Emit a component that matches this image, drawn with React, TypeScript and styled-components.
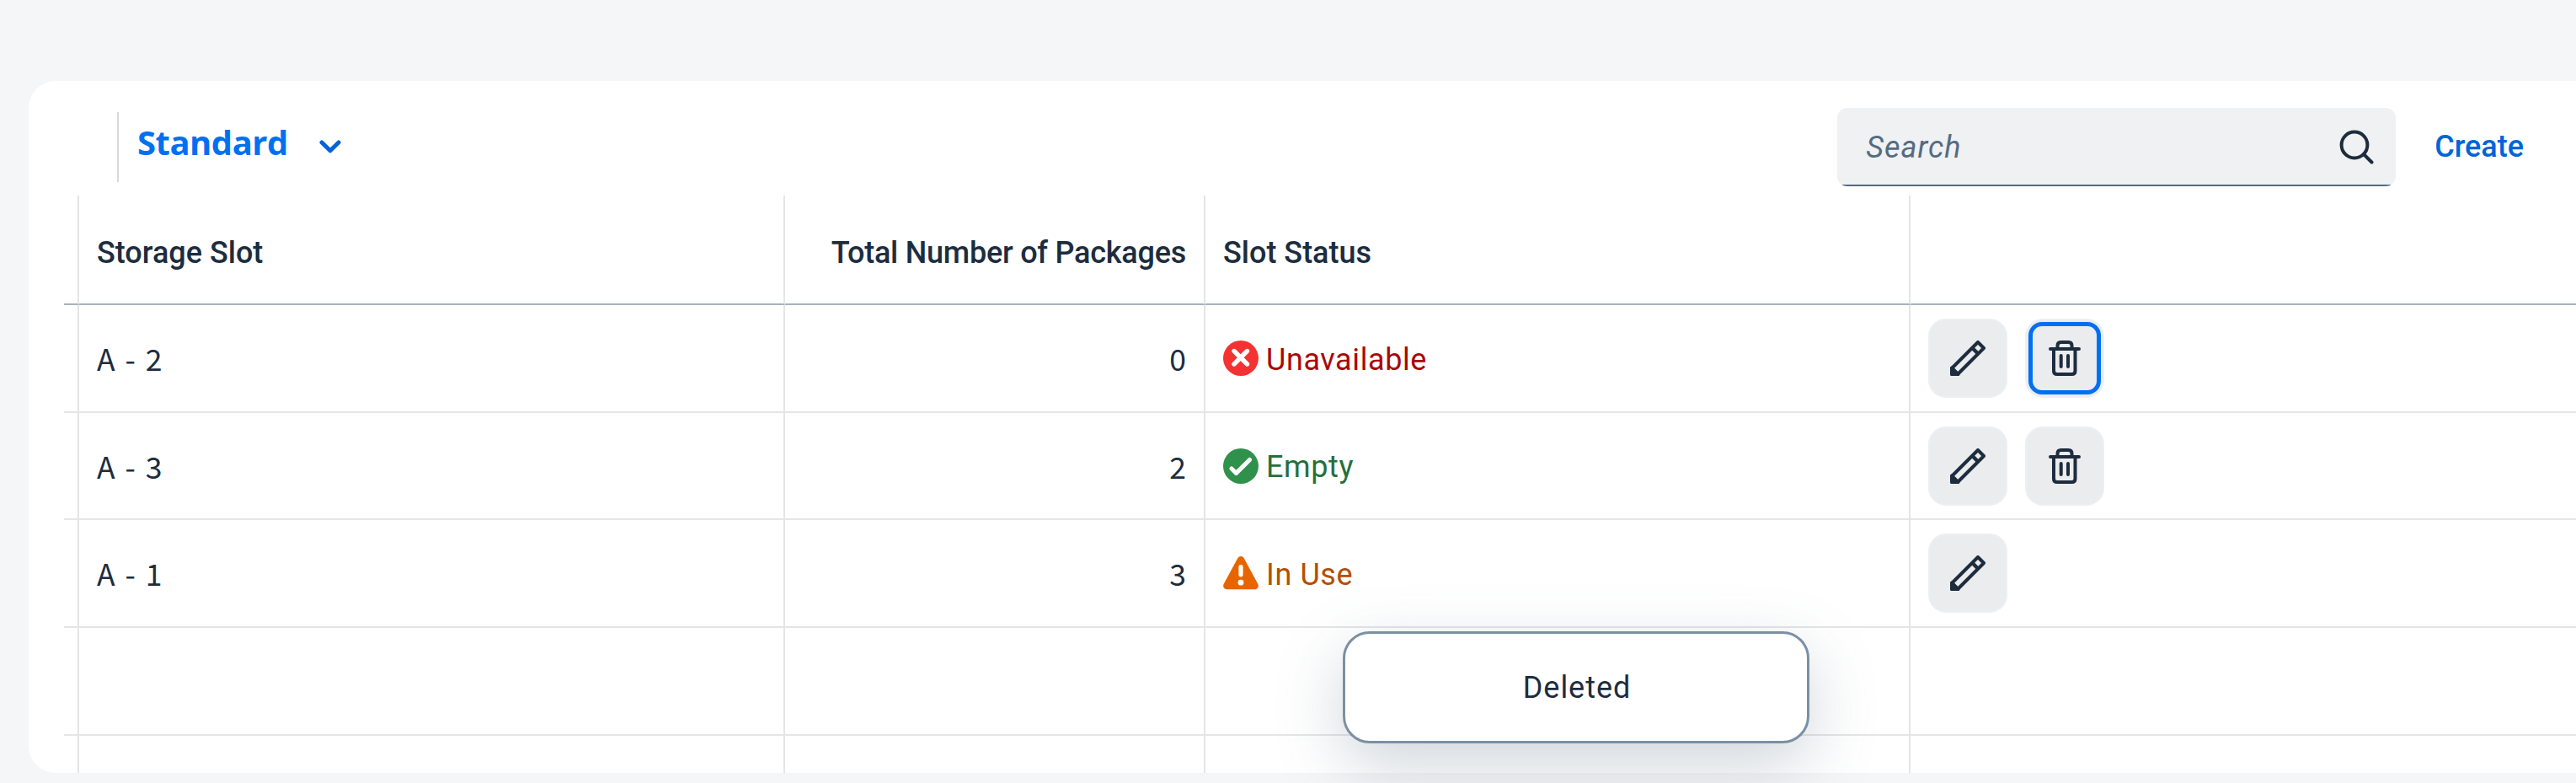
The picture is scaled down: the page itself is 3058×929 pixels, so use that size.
import React from 'react';
import styled, { createGlobalStyle } from 'styled-components';

const ink = '#1d2d3e';
const rule = '#e5e5e5';

const GlobalStyle = createGlobalStyle`
  * { box-sizing: border-box; }
  body { margin: 0; background: #f5f6f7; overflow: hidden; }
`;

const Page = styled.div`
  position: relative;
  height: 929px;
  padding: 96px 0 12px 34px;
  overflow: hidden;
  background: #f5f6f7;
  color: ${ink};
  font-family: Roboto, sans-serif;
  font-size: 36px;
`;

const Card = styled.section`
  display: flex;
  flex-direction: column;
  height: 821px;
  padding-left: 42px;
  overflow: hidden;
  background: #fff;
  border-radius: 32px 0 0 32px;
`;

const Toolbar = styled.header`
  display: flex;
  align-items: flex-start;
  flex: 0 0 136px;
  padding: 32px 62px 0 63px;
`;

const Separator = styled.span`
  width: 2px;
  height: 83px;
  margin-top: 5px;
  background: #d9d9d9;
`;

const VariantButton = styled.button`
  display: flex;
  align-items: flex-start;
  gap: 37px;
  height: 83px;
  padding: 0;
  margin: 5px 0 0 22px;
  border: 0;
  background: none;
  color: #0070f2;
  font: 700 40px/72px 'Open Sans', sans-serif;
  letter-spacing: -0.5px;
`;

const Chevron = styled.svg`
  display: block;
  width: 26px;
  height: 16px;
  margin-top: 33px;
`;

const SearchField = styled.label`
  display: flex;
  align-items: center;
  justify-content: space-between;
  width: 663px;
  height: 93px;
  margin-left: auto;
  padding: 0 26px 0 34px;
  background: linear-gradient(#556b82, #556b82) bottom / 100% 2px no-repeat #eff1f2;
  border-radius: 12px;
`;

const Placeholder = styled.span`
  color: #556b82;
  font-style: italic;
  line-height: 42px;
  letter-spacing: 1px;
`;

const SearchSvg = styled.svg`
  display: block;
  width: 41px;
  height: 41px;
`;

const CreateButton = styled.button`
  padding: 0;
  margin: 25px 0 0 46px;
  border: 0;
  background: none;
  color: #0064d9;
  font: 500 36px/42px Roboto, sans-serif;
`;

const Table = styled.div`
  display: grid;
  grid-template-columns: 18px 838px 499px 837px 1fr;
  grid-template-rows: 130px 128px 127px 128px 128px 46px;
  flex: 1;
`;

const Cell = styled.div<{ $head?: boolean; $end?: boolean; $edge?: boolean; $last?: boolean }>`
  display: flex;
  align-items: center;
  justify-content: ${(p) => (p.$end ? 'flex-end' : 'flex-start')};
  min-width: 0;
  padding: ${(p) => (p.$edge ? '0' : p.$head ? '7px 21px 0' : '0 21px')};
  border-right: ${(p) => (p.$last ? '0' : `2px solid ${rule}`)};
  border-bottom: 2px solid ${(p) => (p.$head ? '#a8b2bd' : rule)};
  white-space: nowrap;
  font-weight: ${(p) => (p.$head ? 500 : 400)};
  letter-spacing: ${(p) => (p.$head && p.$end ? '-0.24px' : 'normal')};
`;

const Value = styled.span`
  font-family: 'Noto Sans CJK JP', sans-serif;
  font-size: 35.5px;
  line-height: 42px;
  word-spacing: 4px;
`;

const Status = styled.span<{ $color: string }>`
  display: flex;
  align-items: center;
  gap: 9px;
  color: ${(p) => p.$color};
  letter-spacing: 0.6px;
  line-height: 42px;
`;

const StatusText = styled.span`
  padding-top: 3px;
`;

const StatusSvg = styled.svg`
  display: block;
  width: 42px;
  height: 42px;
`;

const Actions = styled.div`
  display: flex;
  gap: 21px;
`;

const IconButton = styled.button<{ $focused?: boolean }>`
  position: relative;
  display: grid;
  place-items: center;
  width: 94px;
  height: 94px;
  padding: 0;
  border: 2px solid #edeff0;
  border-radius: 21px;
  background: #eaecee;
  &::after {
    content: '';
    display: ${(p) => (p.$focused ? 'block' : 'none')};
    position: absolute;
    inset: 2px;
    border: 5px solid #0070f2;
    border-radius: 16px;
  }
`;

const ActionSvg = styled.svg`
  display: block;
  width: 42px;
  height: 42px;
`;

const Toast = styled.div`
  position: absolute;
  left: 1594px;
  top: 749px;
  display: grid;
  place-items: center;
  width: 554px;
  height: 133px;
  padding-left: 2px;
  border: 3px solid #7c8fa3;
  border-radius: 32px;
  background: #fff;
  box-shadow: 0 26px 78px rgba(85, 107, 130, 0.28);
  letter-spacing: 0.95px;
  line-height: 42px;
`;

const ErrorIcon = () => (
  <StatusSvg viewBox="0 0 42 42">
    <circle cx="21" cy="21" r="21" fill="#f53232" />
    <path d="M13 12.5 28.5 28M28.5 12.5 13 28" stroke="#fff" strokeWidth="5.4" strokeLinecap="round" />
  </StatusSvg>
);

const SuccessIcon = () => (
  <StatusSvg viewBox="0 0 42 42">
    <circle cx="21" cy="21" r="21" fill="#30914c" />
    <path d="M10 24 15.5 29.3 31.5 13.5" fill="none" stroke="#fff" strokeWidth="5.2" strokeLinecap="round" strokeLinejoin="round" />
  </StatusSvg>
);

const WarningIcon = () => (
  <StatusSvg viewBox="0 0 42 42">
    <path d="M21 5.3 37.6 36H4.4Z" fill="#e76500" stroke="#e76500" strokeWidth="8.5" strokeLinejoin="round" />
    <path d="M21 13.5V22.8" stroke="#fff" strokeWidth="5.2" strokeLinecap="round" />
    <circle cx="21" cy="32.2" r="3.4" fill="#fff" />
  </StatusSvg>
);

const EditIcon = () => (
  <ActionSvg viewBox="0 0 42 42" fill="none" stroke={ink} strokeWidth="4" strokeLinejoin="round">
    <path d="M2 33 33 2 40 9 9 40H2Z" />
    <path d="M26.5 9 33 15.5" strokeWidth="4.5" />
    <path d="M2 32.5 9.5 40H2Z" fill={ink} />
  </ActionSvg>
);

const DeleteIcon = () => (
  <ActionSvg viewBox="0 0 42 42" fill="none" stroke={ink} strokeWidth="4" strokeLinecap="round" strokeLinejoin="round">
    <path d="M4 10H38M8 10V36Q8 40 12 40H29.5Q33.5 40 33.5 36V10" />
    <path d="M12.500 10V6Q12.500 2 16.500 2H25.500Q29.500 2 29.500 6V10" />
    <path d="M16.700 18V31M25 18V31" />
  </ActionSvg>
);

type Kind = 'error' | 'success' | 'warning';

const statusColor: Record<Kind, string> = { error: '#aa0808', success: '#256f3a', warning: '#b44f00' };
const statusIcon: Record<Kind, () => React.JSX.Element> = { error: ErrorIcon, success: SuccessIcon, warning: WarningIcon };

const rows: { slot: string; packages: number; status: string; kind: Kind; removable: boolean; focused?: boolean }[] = [
  { slot: 'A - 2', packages: 0, status: 'Unavailable', kind: 'error', removable: true, focused: true },
  { slot: 'A - 3', packages: 2, status: 'Empty', kind: 'success', removable: true },
  { slot: 'A - 1', packages: 3, status: 'In Use', kind: 'warning', removable: false },
];

const EmptyRow = () => (
  <>
    <Cell $edge />
    <Cell />
    <Cell />
    <Cell />
    <Cell $last />
  </>
);

export default function App() {
  return (
    <Page>
      <GlobalStyle />
      <Card>
        <Toolbar>
          <Separator />
          <VariantButton>
            Standard
            <Chevron viewBox="0 0 26 16" fill="none" stroke="#0064d9" strokeWidth="5" strokeLinecap="round" strokeLinejoin="round">
              <path d="M3 3 13 12.8 23 3" />
            </Chevron>
          </VariantButton>
          <SearchField>
            <Placeholder>Search</Placeholder>
            <SearchSvg viewBox="0 0 41 41" fill="none" stroke={ink} strokeWidth="4" strokeLinecap="round">
              <circle cx="18" cy="18" r="15.4" />
              <path d="M29 29 38.5 38.5" />
            </SearchSvg>
          </SearchField>
          <CreateButton>Create</CreateButton>
        </Toolbar>
        <Table>
          <Cell $head $edge />
          <Cell $head>Storage Slot</Cell>
          <Cell $head $end>Total Number of Packages</Cell>
          <Cell $head>Slot Status</Cell>
          <Cell $head $last />
          {rows.map((row) => {
            const Icon = statusIcon[row.kind];
            return (
              <React.Fragment key={row.slot}>
                <Cell $edge />
                <Cell><Value>{row.slot}</Value></Cell>
                <Cell $end><Value>{row.packages}</Value></Cell>
                <Cell>
                  <Status $color={statusColor[row.kind]}>
                    <Icon />
                    <StatusText>{row.status}</StatusText>
                  </Status>
                </Cell>
                <Cell $last>
                  <Actions>
                    <IconButton aria-label="Edit"><EditIcon /></IconButton>
                    {row.removable && (
                      <IconButton aria-label="Delete" $focused={row.focused}><DeleteIcon /></IconButton>
                    )}
                  </Actions>
                </Cell>
              </React.Fragment>
            );
          })}
          <EmptyRow />
          <EmptyRow />
        </Table>
      </Card>
      <Toast>Deleted</Toast>
    </Page>
  );
}
